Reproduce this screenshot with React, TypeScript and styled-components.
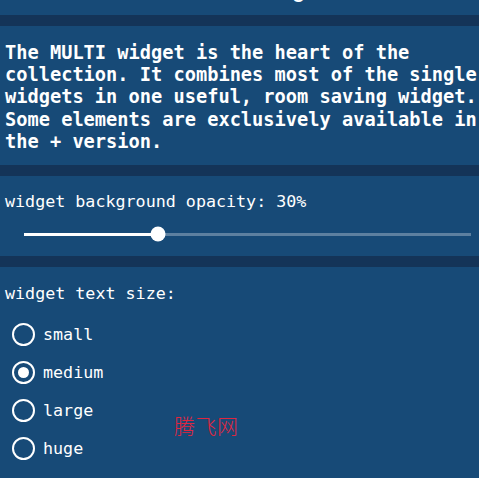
import { useState } from 'react';
import styled, { createGlobalStyle } from 'styled-components';

const GlobalStyle = createGlobalStyle`
  html, body {
    margin: 0;
    padding: 0;
    background: #143458;
    overflow: hidden;
  }
  body {
    font-family: "DejaVu Sans Mono", "Liberation Mono", monospace;
    color: #ffffff;
  }
`;

const Page = styled.div`
  position: relative;
  display: flex;
  flex-direction: column;
  gap: 11px;
  width: 479px;
  height: 478px;
  overflow: hidden;
  background: #143458;

  & > * {
    flex-shrink: 0;
  }
`;

const Panel = styled.section<{ $top?: number; $bottom?: number }>`
  background: #174a77;
  padding: ${(p) => p.$top ?? 0}px 5px ${(p) => p.$bottom ?? 0}px 5px;
`;

const Header = styled.header`
  background: #174a77;
  height: 15px;
  overflow: hidden;
  text-align: center;
  padding-left: 74px;
`;

const Title = styled.h1`
  margin: -21px 0 0;
  font-family: "Liberation Sans", Arial, sans-serif;
  font-size: 20px;
  font-weight: bold;
  line-height: 24px;
`;

const Intro = styled.p`
  margin: 0;
  font-weight: bold;
  font-size: 18.67px;
  line-height: 22.4px;
  white-space: nowrap;
`;

const Label = styled.div`
  font-size: 16.7px;
  line-height: 20px;
`;

const SliderRow = styled.div`
  display: flex;
  align-items: center;
  height: 20px;
  margin-top: 13.5px;
  padding: 0 3px 0 19px;
`;

const Track = styled.div`
  position: relative;
  flex: 1;
  height: 3px;
  background: rgba(255, 255, 255, 0.3);
`;

const Fill = styled.div`
  height: 100%;
  background: #ffffff;
`;

const Thumb = styled.div`
  position: absolute;
  top: 50%;
  width: 15px;
  height: 15px;
  border-radius: 50%;
  background: #ffffff;
  transform: translate(-50%, -50%);
`;

const RadioList = styled.div`
  display: flex;
  flex-direction: column;
  margin-top: 12.5px;
`;

const RadioRow = styled.label`
  display: flex;
  align-items: center;
  gap: 8px;
  height: 38px;
  padding-left: 7px;
  font-size: 16.7px;
  cursor: pointer;
`;

const Circle = styled.span<{ $checked: boolean }>`
  box-sizing: border-box;
  display: flex;
  align-items: center;
  justify-content: center;
  width: 23px;
  height: 23px;
  border: 2px solid #ffffff;
  border-radius: 50%;

  &::after {
    content: "";
    display: ${(p) => (p.$checked ? 'block' : 'none')};
    width: 11px;
    height: 11px;
    border-radius: 50%;
    background: #ffffff;
  }
`;

const Watermark = styled.div`
  position: absolute;
  left: 174px;
  top: 410px;
  font-family: "Noto Sans CJK SC", sans-serif;
  font-weight: 300;
  font-size: 21px;
  letter-spacing: 0.5px;
  color: #e0263f;
  pointer-events: none;
`;

const sizes = ['small', 'medium', 'large', 'huge'];

export default function App() {
  const [opacity] = useState(30);
  const [size, setSize] = useState('medium');

  return (
    <Page>
      <GlobalStyle />
      <Header>
        <Title>Settings</Title>
      </Header>
      <Panel $top={15.5} $bottom={11.5}>
        <Intro>
          The MULTI widget is the heart of the
          <br />
          collection. It combines most of the single
          <br />
          widgets in one useful, room saving widget.
          <br />
          Some elements are exclusively available in
          <br />
          the + version.
        </Intro>
      </Panel>
      <Panel $top={14.5} $bottom={12}>
        <Label>widget background opacity: {opacity}%</Label>
        <SliderRow>
          <Track>
            <Fill style={{ width: `${opacity}%` }} />
            <Thumb style={{ left: `${opacity}%` }} />
          </Track>
        </SliderRow>
      </Panel>
      <Panel $top={15.5} $bottom={20}>
        <Label>widget text size:</Label>
        <RadioList>
          {sizes.map((s) => (
            <RadioRow key={s} onClick={() => setSize(s)}>
              <Circle $checked={size === s} />
              {s}
            </RadioRow>
          ))}
        </RadioList>
      </Panel>
      <Watermark>腾飞网</Watermark>
    </Page>
  );
}
